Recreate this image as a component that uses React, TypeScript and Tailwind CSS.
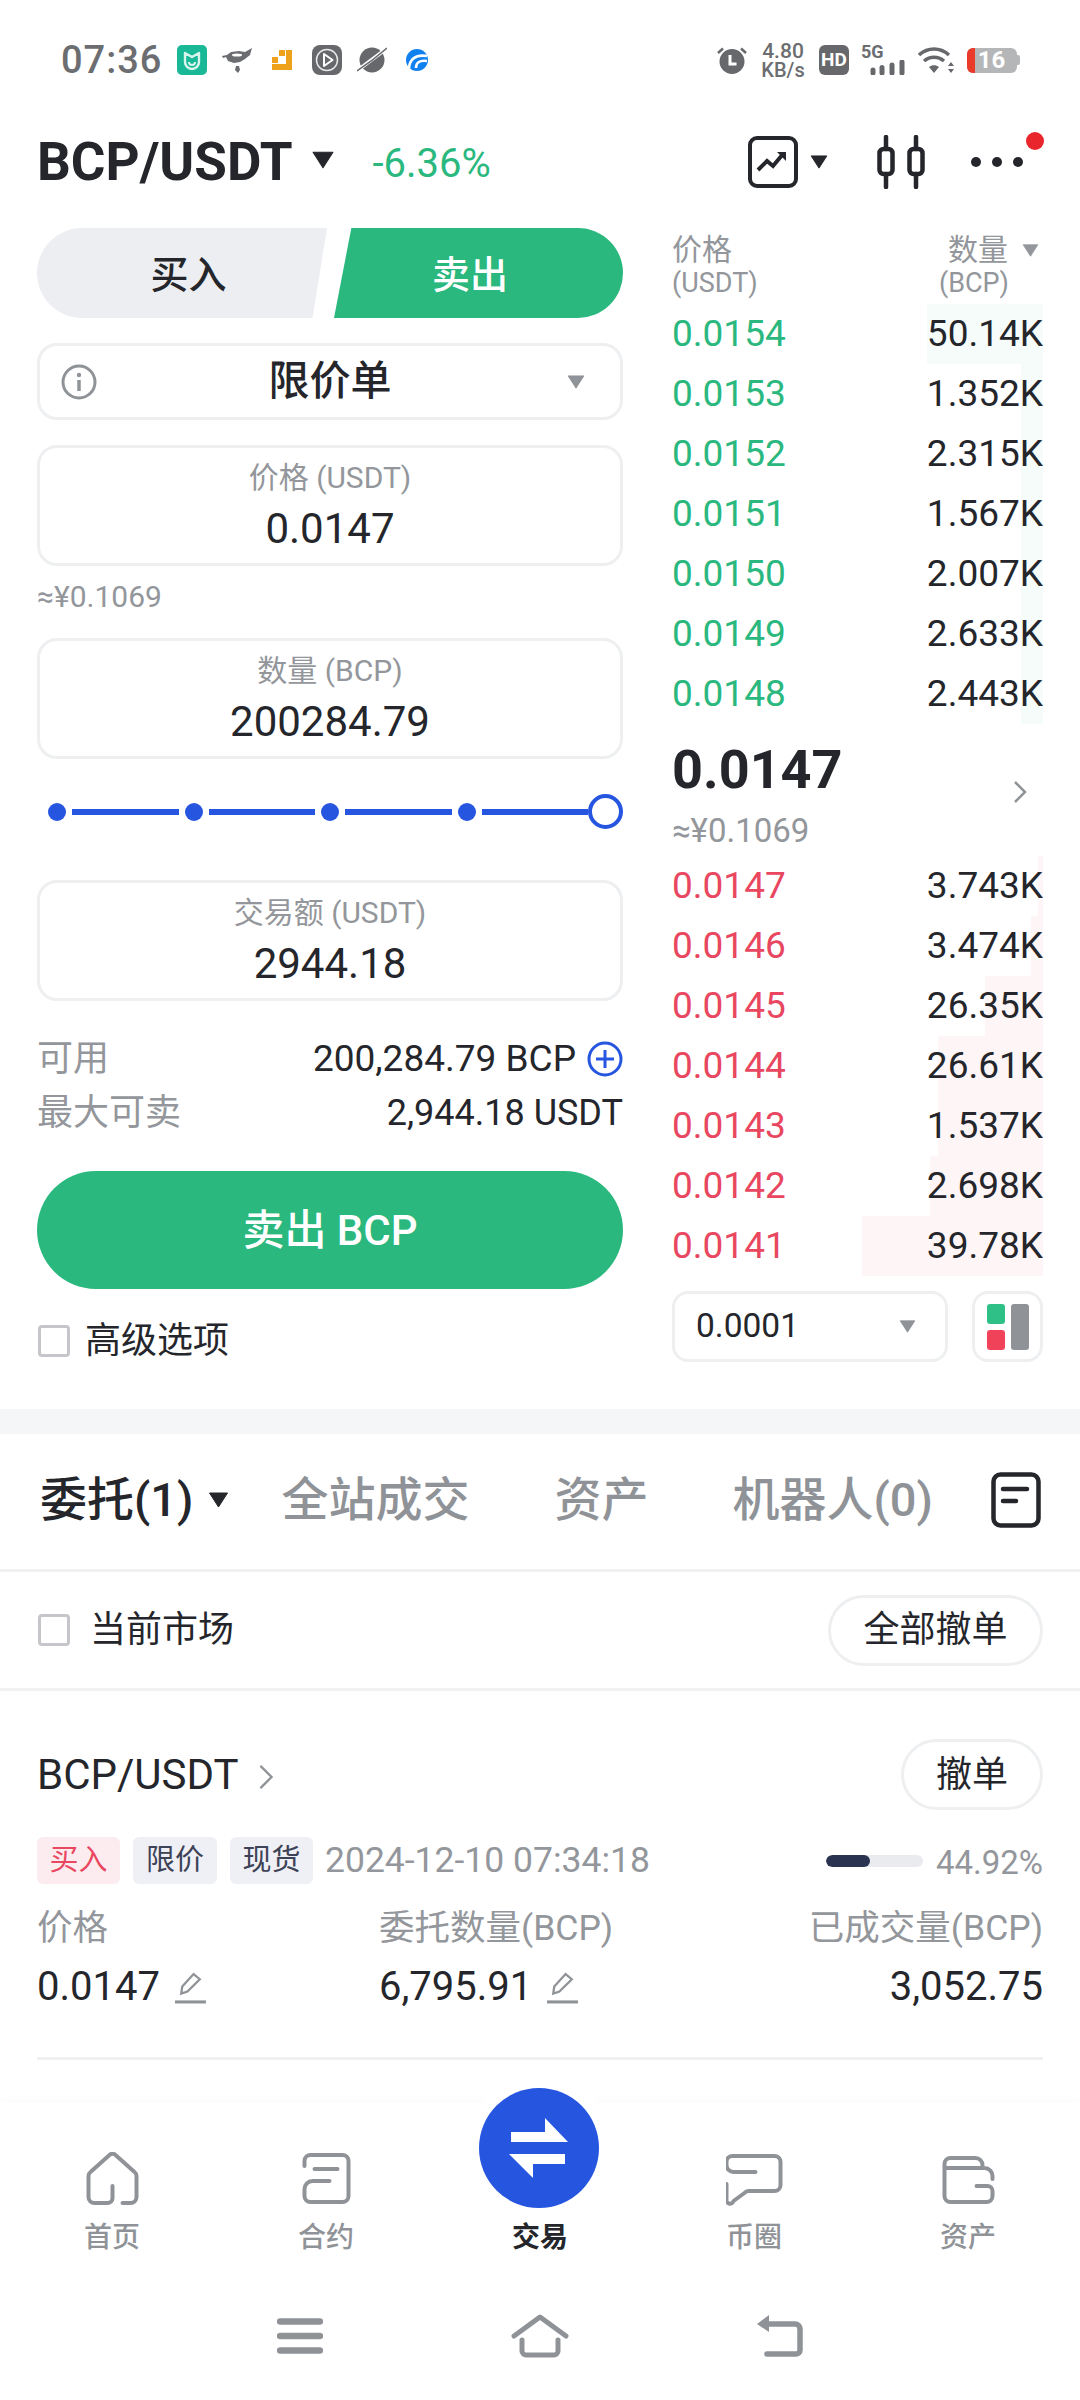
import React from "react";

const asks = [
  { price: "0.0154", qty: "50.14K", bar: 116 },
  { price: "0.0153", qty: "1.352K", bar: 22 },
  { price: "0.0152", qty: "2.315K", bar: 22 },
  { price: "0.0151", qty: "1.567K", bar: 22 },
  { price: "0.0150", qty: "2.007K", bar: 22 },
  { price: "0.0149", qty: "2.633K", bar: 22 },
  { price: "0.0148", qty: "2.443K", bar: 22 },
];

const bids = [
  { price: "0.0147", qty: "3.743K", bar: 5 },
  { price: "0.0146", qty: "3.474K", bar: 12 },
  { price: "0.0145", qty: "26.35K", bar: 58 },
  { price: "0.0144", qty: "26.61K", bar: 105 },
  { price: "0.0143", qty: "1.537K", bar: 105 },
  { price: "0.0142", qty: "2.698K", bar: 113 },
  { price: "0.0141", qty: "39.78K", bar: 181 },
];

function Caret({ className }: { className: string }) {
  return (
    <svg viewBox="0 0 20 16" className={className}>
      <path d="M1 1h18L10 15z" fill="currentColor" stroke="currentColor" strokeLinejoin="round" />
    </svg>
  );
}

function StatusBar() {
  return (
    <div className="h-[120px] flex items-center pl-[61px] pr-[60px] text-[#6b6d70]">
      <span className="text-[38px] font-medium tracking-[1px] w-[104px] mr-[12px]">07:36</span>
      <svg viewBox="0 0 30 30" className="w-[30px] h-[30px] mr-[15px]">
        <rect width="30" height="30" rx="5" fill="#19b897" />
        <path d="M8 8l7 4 7-4v9a7 7 0 0 1-14 0z" fill="none" stroke="#d8f5ec" strokeWidth="2.4" strokeLinejoin="round" />
        <path d="M12 17a3 3 0 0 0 6 0" fill="none" stroke="#d8f5ec" strokeWidth="2" />
      </svg>
      <svg viewBox="0 0 31 30" className="w-[31px] h-[30px] mr-[19px]">
        <path d="M0 11l5-1 4-3 8-1 6 1 7-4-2 7-5 4-5 3-6 1-6-2-2-4-3 1z" fill="#6b6d70" />
        <path d="M14 21l-1 4 3 3 2-3-1-4z" fill="#6b6d70" />
        <ellipse cx="15" cy="10" rx="5" ry="1.500" fill="#fff" />
      </svg>
      <svg viewBox="0 0 20 20" className="w-[20px] h-[20px] mr-[20px]">
        <path d="M14 0h6v20H0v-6h14z" fill="#eea21b" />
        <rect x="7" y="0" width="6" height="6" fill="#eea21b" />
        <rect x="0" y="7" width="6" height="6" fill="#eea21b" />
      </svg>
      <svg viewBox="0 0 30 30" className="w-[30px] h-[30px] mr-[15px]">
        <rect width="30" height="30" rx="8" fill="#66686b" />
        <circle cx="15" cy="15" r="10.500" fill="none" stroke="#e8e8e8" strokeWidth="1.500" />
        <path d="M12 9l8.500 6-8.500 6z" fill="none" stroke="#fff" strokeWidth="2" strokeLinejoin="round" />
      </svg>
      <svg viewBox="0 0 30 30" className="w-[30px] h-[30px] mr-[19px]">
        <circle cx="15" cy="15" r="12.500" fill="#66686b" />
        <path d="M1 25L29 4" stroke="#fff" strokeWidth="3.500" />
        <path d="M0 26C6 22 22 10 30 3" stroke="#66686b" strokeWidth="1.500" fill="none" />
      </svg>
      <svg viewBox="0 0 22 24" className="w-[22px] h-[24px]">
        <circle cx="11" cy="12" r="11" fill="#1281f0" />
        <path d="M3 21C3 12 9 6 21 8M10 20c0-5 3-8 11-7" stroke="#fff" strokeWidth="2.600" fill="none" />
      </svg>
      <div className="flex-1" />
      <svg viewBox="0 0 30 28" className="w-[30px] h-[28px] mr-[12px]">
        <circle cx="15" cy="15.500" r="12.500" fill="#66686b" />
        <path d="M13 9v9h6.500" stroke="#fff" strokeWidth="3" fill="none" />
        <path d="M1 7l5-4.500M29 7l-5-4.500" stroke="#66686b" strokeWidth="2.500" />
      </svg>
      <div className="w-[48px] mr-[12px] flex flex-col items-center text-[21px] leading-[20px] font-medium">
        <span>4.80</span>
        <span className="text-[20px] leading-[19px]">KB/s</span>
      </div>
      <div className="w-[30px] h-[30px] rounded-[6px] bg-[#66686b] text-white text-[19px] font-bold flex items-center justify-center mr-[12px]">
        HD
      </div>
      <div className="relative w-[44px] h-[30px] mr-[13px]">
        <span className="absolute left-0 -top-[2px] text-[18px] leading-[18px] font-bold">5G</span>
        <svg viewBox="0 0 35 15" className="absolute left-[9px] bottom-0 w-[35px] h-[15px]">
          <path d="M3 10v3M12 7.500v5.500M22 5v8M32 2v11" stroke="#66686b" strokeWidth="5" strokeLinecap="round" />
        </svg>
      </div>
      <svg viewBox="0 0 37 28" className="w-[37px] h-[28px] mr-[12px]">
        <path d="M1 9c9-8 21-8 30 0M6 15c6-5 14-5 20 0" stroke="#66686b" strokeWidth="3.500" fill="none" />
        <path d="M11 21c3-2.500 7-2.500 10 0l-5 6z" fill="#66686b" />
        <path d="M33 16l3 4h-6zM33 27l3-4h-6z" fill="#66686b" />
      </svg>
      <div className="flex items-center">
        <div className="relative w-[50px] h-[25px] rounded-[6px] bg-[#b4b6b8] overflow-hidden flex items-center justify-center text-white text-[24px] font-bold">
          <div className="absolute left-0 top-0 bottom-0 w-[8px] bg-[#ea3b2a]" />
          <span className="relative -ml-[1px]">16</span>
        </div>
        <div className="w-[3px] h-[10px] rounded-r-[2px] bg-[#b4b6b8]" />
      </div>
    </div>
  );
}

function Header() {
  return (
    <div className="h-[80px] flex items-center pl-[37px] pt-[4px] text-[#24262b]">
      <span className="text-[53px] font-bold leading-none">BCP/USDT</span>
      <Caret className="w-[22px] h-[18px] ml-[20px] -mt-[4px]" />
      <span className="text-[40px] text-[#2ab87e] ml-[38px] mt-[3px]">-6.36%</span>
      <div className="flex-1" />
      <svg viewBox="0 0 50 52" className="w-[50px] h-[52px]">
        <rect x="2" y="2" width="46" height="48" rx="7" fill="none" stroke="currentColor" strokeWidth="4" />
        <path d="M10 34l9-9 6 5 10-12" fill="none" stroke="currentColor" strokeWidth="4" />
        <path d="M29 16h9v9z" fill="currentColor" />
      </svg>
      <Caret className="w-[18px] h-[14px] ml-[12px] text-[#24262b]" />
      <svg viewBox="0 0 48 54" className="w-[48px] h-[54px] ml-[49px]">
        <g fill="none" stroke="currentColor" strokeWidth="4.500" strokeLinecap="round">
          <rect x="2.500" y="14" width="13" height="25" rx="4" />
          <rect x="32.500" y="14" width="13" height="25" rx="4" />
          <path d="M9 2v12M9 39v13M39 2v12M39 39v13" />
        </g>
      </svg>
      <div className="relative ml-[46px] mr-[57px] w-[52px] flex gap-[11px] items-center h-[54px]">
        <span className="w-[10px] h-[10px] rounded-full bg-[#24262b]" />
        <span className="w-[10px] h-[10px] rounded-full bg-[#24262b]" />
        <span className="w-[10px] h-[10px] rounded-full bg-[#24262b]" />
        <span className="absolute right-[-21px] top-[-3px] w-[18px] h-[18px] rounded-full bg-[#e8262c]" />
      </div>
    </div>
  );
}

function Field({ label, value }: { label: string; value: string }) {
  return (
    <div className="h-[121px] rounded-[20px] border-[3px] border-[#eeeff1] flex flex-col items-center pt-[10px]">
      <span className="text-[30px] leading-[40px] text-[#93969b]">{label}</span>
      <span className="text-[42px] leading-[54px] mt-[4px] text-[#24262b]">{value}</span>
    </div>
  );
}

function Slider() {
  const line = "flex-1 h-[6px] bg-[#2655e0] ml-[6px]";
  const dot = "w-[18px] h-[18px] rounded-full bg-[#2655e0] shrink-0";
  return (
    <div className="h-[121px] flex items-center pl-[11px] pb-[16px]">
      <span className={dot} />
      <span className={`${line} mr-[6px]`} />
      <span className={dot} />
      <span className={`${line} mr-[6px]`} />
      <span className={dot} />
      <span className={`${line} mr-[6px]`} />
      <span className={dot} />
      <span className={line} />
      <span className="w-[35px] h-[35px] rounded-full border-[4px] border-[#2655e0] shrink-0" />
    </div>
  );
}

function TradeForm() {
  return (
    <div className="w-[586px]">
      <div className="flex h-[90px]">
        <div className="w-[290px] bg-[#eceef1] rounded-l-[45px] flex items-center justify-center pl-[13px] pt-[5px] text-[38px] font-medium text-[#24262b] [clip-path:polygon(0_0,100%_0,95%_100%,0_100%)]">
          买入
        </div>
        <div className="w-[289px] ml-[7px] bg-[#2ab87e] rounded-r-[45px] flex items-center justify-center pr-[17px] pt-[5px] text-[38px] font-medium text-white [clip-path:polygon(6%_0,100%_0,100%_100%,0_100%)]">
          卖出
        </div>
      </div>
      <div className="mt-[25px] h-[77px] rounded-[20px] border-[3px] border-[#eeeff1] flex items-center pl-[21px] pr-[35px] text-[#24262b]">
        <svg viewBox="0 0 36 36" className="w-[36px] h-[36px] text-[#8f9398]">
          <circle cx="18" cy="18" r="16" fill="none" stroke="currentColor" strokeWidth="3" />
          <circle cx="18" cy="11" r="2.200" fill="currentColor" />
          <path d="M18 16v11" stroke="currentColor" strokeWidth="3.500" />
        </svg>
        <span className="flex-1 mr-[4px] text-center text-[41px] font-medium">限价单</span>
        <Caret className="w-[18px] h-[14px] text-[#8f9398]" />
      </div>
      <div className="mt-[25px]">
        <Field label="价格 (USDT)" value="0.0147" />
      </div>
      <div className="h-[72px] pb-[12px] flex items-center text-[30px] text-[#93969b]">≈¥0.1069</div>
      <Field label="数量 (BCP)" value="200284.79" />
      <Slider />
      <Field label="交易额 (USDT)" value="2944.18" />
      <div className="mt-[31px] h-[54px] flex items-center justify-between text-[37px]">
        <span className="text-[#93969b] text-[36px]">可用</span>
        <span className="flex items-center text-[#24262b]">
          200,284.79 BCP
          <svg viewBox="0 0 36 36" className="w-[36px] h-[36px] ml-[11px] text-[#2655e0]">
            <circle cx="18" cy="18" r="16" fill="none" stroke="currentColor" strokeWidth="3" />
            <path d="M18 9v18M9 18h18" stroke="currentColor" strokeWidth="3" />
          </svg>
        </span>
      </div>
      <div className="h-[54px] flex items-center justify-between text-[36px]">
        <span className="text-[#93969b]">最大可卖</span>
        <span className="text-[#24262b]">2,944.18 USDT</span>
      </div>
      <div className="mt-[31px] h-[118px] rounded-full bg-[#2ab87e] flex items-center justify-center text-[42px] font-medium text-white">
        卖出 BCP
      </div>
      <div className="mt-[32px] h-[40px] flex items-center text-[36px] text-[#24262b]">
        <span className="w-[32px] h-[32px] rounded-[4px] border-[3px] border-[#c4c6c9] mr-[15px] ml-[1px]" />
        高级选项
      </div>
    </div>
  );
}

function BookRow({ price, qty, bar, up }: { price: string; qty: string; bar: number; up: boolean }) {
  return (
    <div className="relative h-[60px] flex items-center justify-between text-[37px]">
      <div
        className={up ? "absolute right-0 top-0 bottom-0 bg-[#f6fcf9]" : "absolute right-0 top-0 bottom-0 bg-[#fef5f6]"}
        style={{ width: bar }}
      />
      <span className={up ? "relative text-[#2ab87e]" : "relative text-[#e8475f]"}>{price}</span>
      <span className="relative text-[#24262b]">{qty}</span>
    </div>
  );
}

function OrderBook() {
  return (
    <div className="w-[371px]">
      <div className="h-[76px] pt-[6px] flex justify-between text-[#93969b]">
        <div className="flex flex-col">
          <span className="text-[30px] leading-[36px] -mt-[2px]">价格</span>
          <span className="text-[27px] leading-[30px]">(USDT)</span>
        </div>
        <div className="flex flex-col items-end">
          <span className="text-[30px] leading-[36px] -mt-[2px] flex items-center">
            数量
            <Caret className="w-[17px] h-[13px] ml-[14px] mr-[4px]" />
          </span>
          <span className="text-[27px] leading-[30px] mr-[34px]">(BCP)</span>
        </div>
      </div>
      {asks.map((r) => (
        <BookRow key={r.price} {...r} up />
      ))}
      <div className="h-[132px] relative pt-[16px]">
        <div className="text-[54px] leading-[60px] font-bold text-[#24262b]">0.0147</div>
        <div className="text-[33px] leading-[44px] mt-[9px] text-[#93969b]">≈¥0.1069</div>
        <svg viewBox="0 0 14 24" className="absolute right-[16px] top-[56px] w-[14px] h-[24px] text-[#8f9398]">
          <path d="M2 2l10 10L2 22" fill="none" stroke="currentColor" strokeWidth="2.500" />
        </svg>
      </div>
      {bids.map((r) => (
        <BookRow key={r.price} {...r} up={false} />
      ))}
      <div className="mt-[15px] flex justify-between">
        <div className="w-[276px] h-[71px] rounded-[16px] border-[3px] border-[#eeeff1] flex items-center justify-between pl-[21px] pr-[29px] text-[33.500px] text-[#24262b]">
          0.0001
          <Caret className="w-[17px] h-[13px] text-[#8f9398]" />
        </div>
        <div className="w-[71px] h-[71px] rounded-[16px] border-[3px] border-[#eeeff1] flex items-center justify-center gap-[6px]">
          <div className="flex flex-col gap-[6px]">
            <span className="block w-[18px] h-[20px] rounded-[3px] bg-[#2fc087]" />
            <span className="block w-[18px] h-[20px] rounded-[3px] bg-[#f0435a]" />
          </div>
          <span className="block w-[18px] h-[46px] rounded-[3px] bg-[#8f9398]" />
        </div>
      </div>
    </div>
  );
}

function Tabs() {
  return (
    <div className="h-[138px] pb-[3px] flex items-center pl-[40px] border-b-[3px] border-[#f0f1f3] text-[47px] text-[#8f9398] font-medium">
      <span className="text-[#24262b]">委托(1)</span>
      <Caret className="w-[21px] h-[16px] ml-[15px] text-[#24262b]" />
      <span className="ml-[52px]">全站成交</span>
      <span className="ml-[85px]">资产</span>
      <span className="ml-[84px]">机器人(0)</span>
      <svg viewBox="0 0 50 56" className="w-[50px] h-[56px] ml-[58px] text-[#24262b]">
        <rect x="2.500" y="2.500" width="45" height="51" rx="7" fill="none" stroke="currentColor" strokeWidth="4.500" />
        <path d="M12 17h24M12 29h13" stroke="currentColor" strokeWidth="4.500" strokeLinecap="round" />
      </svg>
    </div>
  );
}

function Pencil() {
  return (
    <svg viewBox="0 0 32 32" className="w-[33px] h-[33px] text-[#8f9398] ml-[14px]">
      <path d="M7 22L8 15 19 3l6 5-12 12z" fill="none" stroke="currentColor" strokeWidth="2.200" />
      <path d="M1 30h30" stroke="currentColor" strokeWidth="3" />
    </svg>
  );
}

function OrderCard() {
  return (
    <div className="mx-[37px] h-[369px] border-b-[3px] border-[#f0f1f3]">
      <div className="h-[121px] pt-[48px] flex items-start justify-between">
        <span className="flex items-center text-[42px] leading-[72px] text-[#24262b]">
          BCP/USDT
          <svg viewBox="0 0 16 28" className="w-[16px] h-[26px] ml-[19px] mt-[4px] text-[#8f9398]">
            <path d="M2 2l12 12L2 26" fill="none" stroke="currentColor" strokeWidth="2.500" />
          </svg>
        </span>
        <div className="w-[142px] h-[71px] rounded-full border-[3px] border-[#eeeff1] flex items-center justify-center text-[36px] text-[#24262b]">
          撤单
        </div>
      </div>
      <div className="mt-[25px] h-[47px] flex items-center">
        <span className="w-[83px] h-[47px] rounded-[6px] bg-[#fdecef] text-[#e8475f] text-[29px] flex items-center justify-center">
          买入
        </span>
        <span className="w-[84px] h-[47px] ml-[13px] rounded-[6px] bg-[#eff0f5] text-[#3d4256] text-[29px] flex items-center justify-center">
          限价
        </span>
        <span className="w-[83px] h-[47px] ml-[13px] rounded-[6px] bg-[#eff0f5] text-[#3d4256] text-[29px] flex items-center justify-center">
          现货
        </span>
        <span className="ml-[12px] text-[35.500px] text-[#93969b]">2024-12-10 07:34:18</span>
        <div className="flex-1" />
        <div className="w-[97px] h-[12px] rounded-full bg-[#e9ebee] overflow-hidden">
          <div className="h-full rounded-full bg-[#2a3450]" style={{ width: "45%" }} />
        </div>
        <span className="ml-[13px] text-[33px] text-[#93969b] mt-[4px]">44.92%</span>
      </div>
      <div className="mt-[20px] flex justify-between text-[35.500px] text-[#93969b]">
        <div className="w-[342px]">
          <div className="h-[50px] flex items-center">价格</div>
          <div className="h-[60px] mt-[3px] flex items-center text-[40px] text-[#24262b]">
            0.0147
            <Pencil />
          </div>
        </div>
        <div className="flex-1">
          <div className="h-[50px] flex items-center">委托数量(BCP)</div>
          <div className="h-[60px] mt-[3px] flex items-center text-[40px] text-[#24262b]">
            6,795.91
            <Pencil />
          </div>
        </div>
        <div className="flex flex-col items-end">
          <div className="h-[50px] flex items-center">已成交量(BCP)</div>
          <div className="h-[60px] mt-[3px] flex items-center text-[40px] text-[#24262b]">3,052.75</div>
        </div>
      </div>
    </div>
  );
}

const navIcons = {
  home: {
    box: "-2.500 0 57 54",
    d: "M26 34v12a5 5 0 0 1-5 5H8a6 6 0 0 1-6-6V24a5 5 0 0 1 2-4L23 3a4 4 0 0 1 6 0l19 17a5 5 0 0 1 2 4v21a6 6 0 0 1-6 6h-8",
  },
  futures: {
    box: "-4.500 0 57 54",
    d: "M2 14V9a6 6 0 0 1 6-6h32a6 6 0 0 1 6 6v35a6 6 0 0 1-6 6H8a6 6 0 0 1-6-6v-7a8 8 0 0 1 8-8h17M12 17h23",
  },
  feed: {
    box: "1.500 -1 57 54",
    d: "M31 19H9a7 7 0 0 1-7-7V9a6 6 0 0 1 6-6h42a6 6 0 0 1 6 6v23a6 6 0 0 1-6 6H24a5 5 0 0 0-4 2L9 48a3 3 0 0 1-7-2V31",
  },
  assets: {
    box: "-2.500 -3 57 54",
    d: "M2 13h40a8 8 0 0 1 8 8v3M34 31h11a5 5 0 0 1 5 5v5a6 6 0 0 1-6 6H8a6 6 0 0 1-6-6V9a6 6 0 0 1 6-6h25a7 7 0 0 1 7 7v3",
  },
};

function NavItem({ icon, label }: { icon: { box: string; d: string }; label: string }) {
  return (
    <div className="flex flex-col items-center">
      <svg viewBox={icon.box} className="w-[57px] h-[54px] text-[#8f9398]">
        <path d={icon.d} fill="none" stroke="currentColor" strokeWidth="4" strokeLinecap="round" strokeLinejoin="round" />
      </svg>
      <span className="mt-[14px] text-[28px] leading-[36px] text-[#8f9398] font-medium">{label}</span>
    </div>
  );
}

function BottomNav() {
  return (
    <div className="relative h-[297px] bg-white shadow-[0_-4px_8px_rgba(0,0,0,0.015)]">
      <div className="absolute left-[475px] -top-[30px] w-[130px] h-[60px] rounded-t-full bg-white" />
      <div className="absolute left-[479px] top-[-15px] w-[120px] h-[120px] rounded-full bg-[#2655e0] flex items-center justify-center">
        <svg viewBox="0 0 60 60" className="w-[60px] h-[60px]">
          <path d="M36 0L59 24H2V14H36z" fill="#fff" />
          <path d="M24 60L0 36H56V46H24z" fill="#fff" />
        </svg>
      </div>
      <div className="grid grid-cols-5 px-[5px] pt-[49px] relative">
        <NavItem icon={navIcons.home} label="首页" />
        <NavItem icon={navIcons.futures} label="合约" />
        <div className="flex flex-col items-center pt-[68px]">
          <span className="text-[28px] leading-[36px] font-bold text-[#24262b]">交易</span>
        </div>
        <NavItem icon={navIcons.feed} label="币圈" />
        <NavItem icon={navIcons.assets} label="资产" />
      </div>
      <div className="mt-[58px] flex items-center justify-center text-[#8f9398]">
        <svg viewBox="0 0 46 36" className="w-[46px] h-[36px]">
          <path d="M3 3.500h40M3 18h40M3 32.500h40" stroke="currentColor" strokeWidth="6.500" strokeLinecap="round" />
        </svg>
        <svg viewBox="0 0 58 44" className="w-[58px] h-[44px] ml-[188px]">
          <path d="M3 22L29 3l26 19" fill="none" stroke="currentColor" strokeWidth="5" strokeLinecap="round" strokeLinejoin="round" />
          <path d="M11 26v11a4 4 0 0 0 4 4h28a4 4 0 0 0 4-4V26" fill="none" stroke="currentColor" strokeWidth="5" strokeLinecap="round" />
        </svg>
        <svg viewBox="0 0 48 44" className="w-[48px] h-[44px] ml-[187px]">
          <path d="M1 10L13 1v17z" fill="currentColor" />
          <path d="M12 10h27a5 5 0 0 1 5 5v21a4 4 0 0 1-4 4H11" fill="none" stroke="currentColor" strokeWidth="5.500" strokeLinecap="round" />
        </svg>
      </div>
    </div>
  );
}

export default function App() {
  return (
    <div className="w-[1080px] h-[2400px] bg-white flex flex-col overflow-hidden font-['Roboto','Noto_Sans_CJK_SC',sans-serif]">
      <StatusBar />
      <Header />
      <div className="mt-[28px] h-[1181px] flex justify-between px-[37px]">
        <TradeForm />
        <OrderBook />
      </div>
      <div className="h-[25px] bg-[#f5f6f8]" />
      <Tabs />
      <div className="h-[119px] px-[37px] flex items-center justify-between border-b-[3px] border-[#f0f1f3]">
        <div className="flex items-center text-[36px] text-[#24262b]">
          <span className="w-[32px] h-[32px] rounded-[4px] border-[3px] border-[#c4c6c9] mr-[20px] ml-[1px]" />
          当前市场
        </div>
        <div className="w-[215px] h-[71px] rounded-full border-[3px] border-[#eeeff1] flex items-center justify-center text-[36px] text-[#24262b]">
          全部撤单
        </div>
      </div>
      <OrderCard />
      <div className="flex-1" />
      <BottomNav />
    </div>
  );
}
